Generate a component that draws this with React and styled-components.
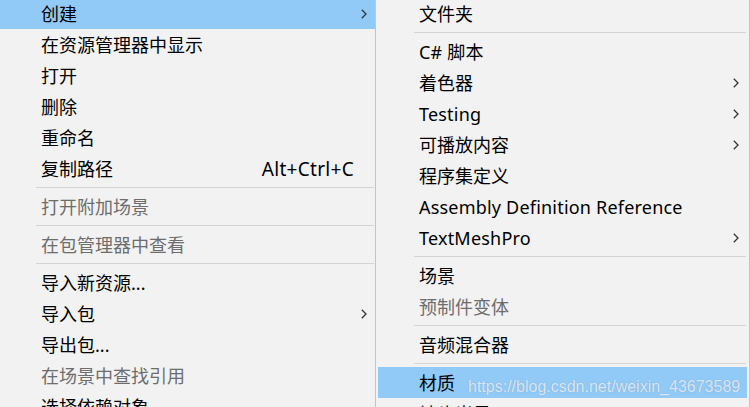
import React from "react";
import styled, { createGlobalStyle } from "styled-components";

const Global = createGlobalStyle`
  html, body { margin: 0; padding: 0; background: #f2f2f2; }
  body { width: 750px; height: 407px; overflow: hidden; }
`;

const Page = styled.div`
  position: relative;
  display: flex;
  align-items: flex-start;
  width: 750px;
  height: 407px;
  overflow: hidden;
  font-family: "Noto Sans", "Noto Sans CJK SC", sans-serif;
  font-size: 18px;
`;

const Menu = styled.div`
  box-sizing: border-box;
  display: flex;
  flex-direction: column;
  flex: none;
  width: ${(p) => p.$width}px;
  margin-top: -2px;
  padding: ${(p) => p.$pad};
  background: #f2f2f2;
  border-right: 1px solid #c4c4c4;
`;

const Item = styled.div`
  box-sizing: border-box;
  display: flex;
  align-items: center;
  height: 31px;
  flex: none;
  padding: 1px 8px 0 41px;
  background: ${(p) => (p.$active ? "#91c9f7" : "transparent")};
  color: ${(p) => (p.$disabled ? "#6d6d6d" : "#000")};
  white-space: nowrap;
`;

const Label = styled.span`
  flex: 1;
  line-height: 30px;
  letter-spacing: ${(p) => (p.$latin ? "0.2px" : "0")};
`;

const Shortcut = styled.span`
  line-height: 30px;
  font-size: 19px;
  letter-spacing: 0.3px;
`;

const ArrowSlot = styled.span`
  display: flex;
  justify-content: flex-end;
  align-items: center;
  width: 13px;
  height: 30px;
`;

const Separator = styled.div`
  flex: none;
  height: 7px;
  display: flex;
  align-items: center;
  margin: 0 1px 0 36px;
  &::after {
    content: "";
    flex: 1;
    height: 1px;
    background: #d4d4d4;
  }
`;

const Watermark = styled.div`
  position: absolute;
  left: 468px;
  top: 377px;
  font-family: "Liberation Sans", Arial, sans-serif;
  font-size: 16px;
  letter-spacing: 0;
  line-height: 20px;
  color: rgba(255, 255, 255, 0.72);
  text-shadow: 0 0 1px rgba(90, 110, 130, 0.45);
  white-space: nowrap;
  pointer-events: none;
`;

const Chevron = () => (
  <svg width="6" height="10" viewBox="0 0 6 10">
    <polyline points="0.8,0.8 5,5 0.8,9.2" fill="none" stroke="#333" strokeWidth="1.3" />
  </svg>
);

const Row = ({ label, shortcut, sub, active, disabled }) => (
  <Item $active={active} $disabled={disabled}>
    <Label $latin={/^[A-Za-z]/.test(label)}>{label}</Label>
    {shortcut && <Shortcut>{shortcut}</Shortcut>}
    <ArrowSlot>{sub && <Chevron />}</ArrowSlot>
  </Item>
);

const left = [
  { label: "创建", sub: true, active: true },
  { label: "在资源管理器中显示" },
  { label: "打开" },
  { label: "删除" },
  { label: "重命名" },
  { label: "复制路径", shortcut: "Alt+Ctrl+C" },
  "sep",
  { label: "打开附加场景", disabled: true },
  "sep",
  { label: "在包管理器中查看", disabled: true },
  "sep",
  { label: "导入新资源..." },
  { label: "导入包", sub: true },
  { label: "导出包..." },
  { label: "在场景中查找引用", disabled: true },
  { label: "选择依赖对象" },
];

const right = [
  { label: "文件夹" },
  "sep",
  { label: "C# 脚本" },
  { label: "着色器", sub: true },
  { label: "Testing", sub: true },
  { label: "可播放内容", sub: true },
  { label: "程序集定义" },
  { label: "Assembly Definition Reference" },
  { label: "TextMeshPro", sub: true },
  "sep",
  { label: "场景" },
  { label: "预制件变体", disabled: true },
  "sep",
  { label: "音频混合器" },
  "sep",
  { label: "材质", active: true },
  { label: "镜头光晕" },
];

const renderList = (list) =>
  list.map((it, i) =>
    it === "sep" ? <Separator key={i} /> : <Row key={i} {...it} />
  );

export default function App() {
  return (
    <>
      <Global />
      <Page>
        <Menu $width={376} $pad="0">
          {renderList(left)}
        </Menu>
        <Menu $width={374} $pad="0 2px 0 2px">
          {renderList(right)}
        </Menu>
        <Watermark>https://blog.csdn.net/weixin_43673589</Watermark>
      </Page>
    </>
  );
}
